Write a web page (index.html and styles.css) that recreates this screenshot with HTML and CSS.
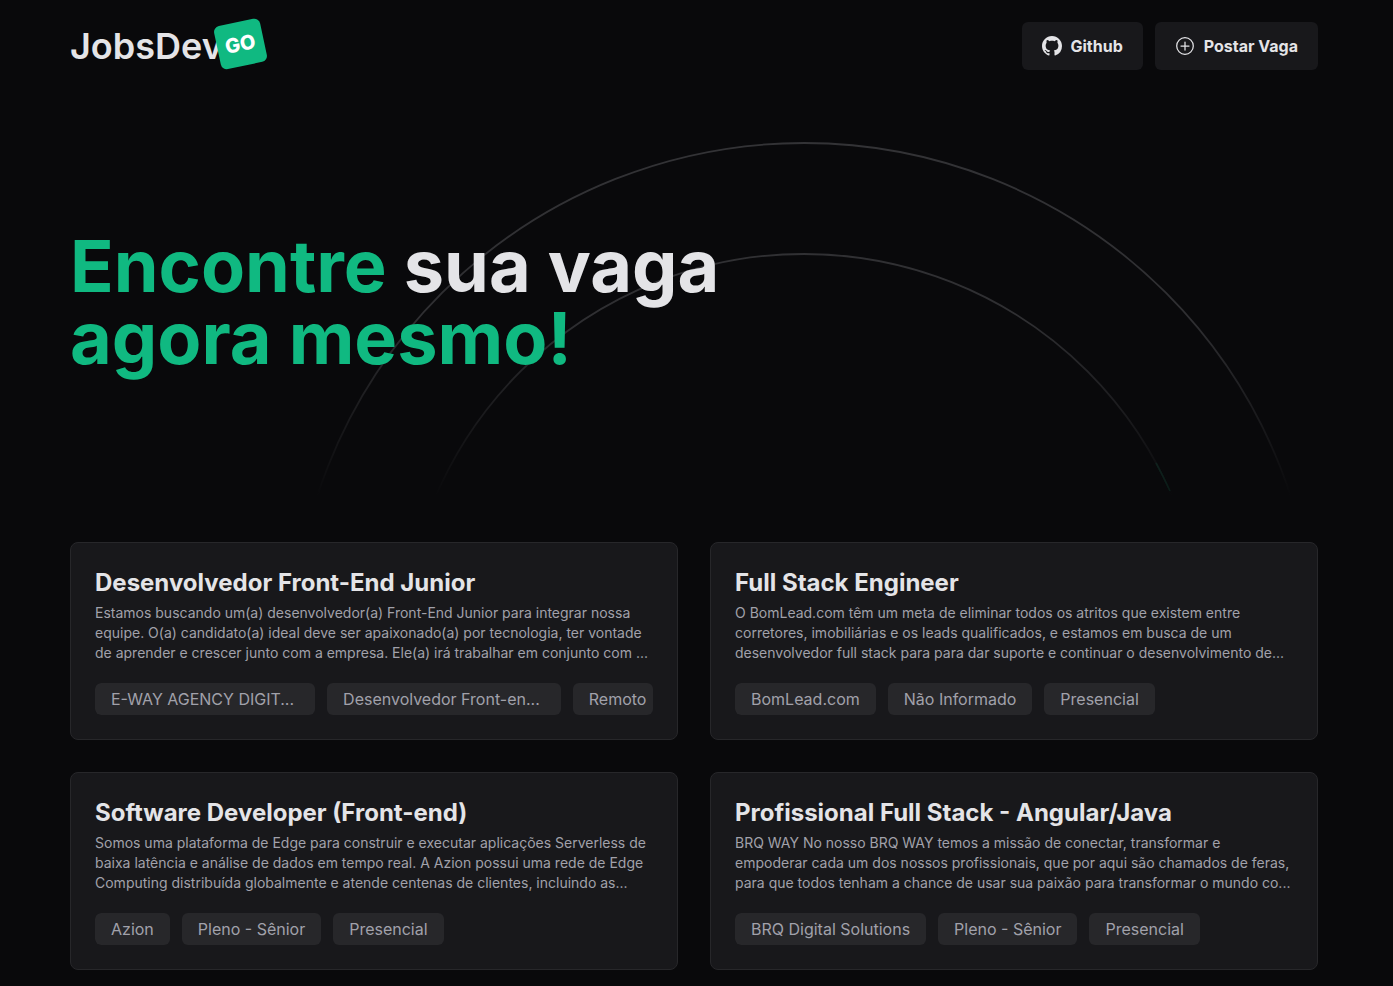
FILE: index.html
```html
<!DOCTYPE html>
<html lang="pt-BR">
<head>
<meta charset="utf-8">
<meta name="viewport" content="width=device-width, initial-scale=1">
<title>JobsDev</title>
<link rel="stylesheet" href="styles.css">
</head>
<body>
<div class="container">
  <header class="header">
    <a class="logo" href="#">JobsDev<span class="logo-badge">GO</span></a>
    <nav class="actions">
      <a class="action" href="#">
        <svg class="action-icon" viewBox="0 0 16 16" fill="currentColor" aria-hidden="true"><path d="M8 0C3.58 0 0 3.58 0 8c0 3.54 2.29 6.53 5.47 7.59.4.07.55-.17.55-.38 0-.19-.01-.82-.01-1.49-2.01.37-2.53-.49-2.69-.94-.09-.23-.48-.94-.82-1.13-.28-.15-.68-.52-.01-.53.63-.01 1.08.58 1.23.82.72 1.21 1.87.87 2.33.66.07-.52.28-.87.51-1.07-1.78-.2-3.64-.89-3.64-3.95 0-.87.31-1.59.82-2.15-.08-.2-.36-1.02.08-2.12 0 0 .67-.21 2.2.82.64-.18 1.32-.27 2-.27s1.36.09 2 .27c1.53-1.04 2.2-.82 2.2-.82.44 1.1.16 1.92.08 2.12.51.56.82 1.27.82 2.15 0 3.07-1.87 3.75-3.65 3.95.29.25.54.73.54 1.48 0 1.07-.01 1.93-.01 2.2 0 .21.15.46.55.38A8.01 8.01 0 0 0 16 8c0-4.42-3.58-8-8-8z"/></svg>
        Github
      </a>
      <a class="action" href="#">
        <svg class="action-icon" viewBox="0 0 20 20" fill="none" stroke="currentColor" stroke-width="1.25" stroke-linecap="round" aria-hidden="true"><circle cx="10" cy="10" r="8.3"/><path d="M10 6v8M6 10h8"/></svg>
        Postar Vaga
      </a>
    </nav>
  </header>

  <main>
    <section class="hero">
      <svg class="rings" viewBox="0 0 1026 360" fill="none" aria-hidden="true">
        <defs>
          <linearGradient id="ring-fade" gradientUnits="userSpaceOnUse" x1="0" y1="0" x2="0" y2="354">
            <stop offset="0" stop-color="#333336"/>
            <stop offset="0.5" stop-color="#2f2f32"/>
            <stop offset="1" stop-color="#2f2f32" stop-opacity="0"/>
          </linearGradient>
        </defs>
        <circle cx="513" cy="513" r="512" stroke="url(#ring-fade)" stroke-width="1.8"/>
        <circle cx="513" cy="513" r="401" stroke="url(#ring-fade)" stroke-width="1.8"/>
        <path d="M865 321A401 401 0 0 1 879 349" stroke="#10b981" stroke-opacity="0.1" stroke-width="1.8"/>
      </svg>
      <h1 class="title"><span class="accent">Encontre</span> sua vaga <span class="accent">agora mesmo!</span></h1>
    </section>

    <section class="jobs" aria-label="Vagas">
      <article class="card">
        <h2 class="card-title">Desenvolvedor Front-End Junior</h2>
        <p class="card-text">Estamos buscando um(a) desenvolvedor(a) Front-End Junior para integrar nossa equipe. O(a) candidato(a) ideal deve ser apaixonado(a) por tecnologia, ter vontade de aprender e crescer junto com a empresa. Ele(a) irá trabalhar em conjunto com ...</p>
        <ul class="tags"><li class="tag tag-shortened">E-WAY AGENCY DIGIT...</li><li class="tag tag-shortened">Desenvolvedor Front-en...</li><li class="tag">Remoto</li></ul>
      </article>
      <article class="card">
        <h2 class="card-title">Full Stack Engineer</h2>
        <p class="card-text">O BomLead.com têm um meta de eliminar todos os atritos que existem entre corretores, imobiliárias e os leads qualificados, e estamos em busca de um desenvolvedor full stack para para dar suporte e continuar o desenvolvimento de...</p>
        <ul class="tags"><li class="tag">BomLead.com</li><li class="tag">Não Informado</li><li class="tag">Presencial</li></ul>
      </article>
      <article class="card">
        <h2 class="card-title">Software Developer (Front-end)</h2>
        <p class="card-text">Somos uma plataforma de Edge para construir e executar aplicações Serverless de baixa latência e análise de dados em tempo real. A Azion possui uma rede de Edge Computing distribuída globalmente e atende centenas de clientes, incluindo as...</p>
        <ul class="tags"><li class="tag">Azion</li><li class="tag">Pleno - Sênior</li><li class="tag">Presencial</li></ul>
      </article>
      <article class="card">
        <h2 class="card-title">Profissional Full Stack - Angular/Java</h2>
        <p class="card-text">BRQ WAY No nosso BRQ WAY temos a missão de conectar, transformar e empoderar cada um dos nossos profissionais, que por aqui são chamados de feras, para que todos tenham a chance de usar sua paixão para transformar o mundo co...</p>
        <ul class="tags"><li class="tag">BRQ Digital Solutions</li><li class="tag">Pleno - Sênior</li><li class="tag">Presencial</li></ul>
      </article>
    </section>
  </main>
</div>
</body>
</html>
```
FILE: styles.css
```css
*, *::before, *::after { box-sizing: border-box; }

body {
  margin: 0;
  padding-right: 5px;
  background: #09090b;
  color: #e4e4e7;
  font-family: Inter, "Liberation Sans", sans-serif;
  font-size: 16px;
  line-height: 24px;
}

h1, h2, p, ul { margin: 0; padding: 0; }

a { color: inherit; text-decoration: none; }

.container {
  max-width: 1280px;
  margin: 0 auto;
  padding: 0 16px 16px;
}

.header {
  display: flex;
  align-items: center;
  justify-content: space-between;
  padding: 22px 0;
}

.logo {
  position: relative;
  font-size: 36px;
  line-height: 40px;
  font-weight: 600;
}

.logo-badge {
  position: absolute;
  top: -4px;
  right: -41px;
  padding: 11px 8px;
  border-radius: 6px;
  background: #10b981;
  color: #fff;
  font-size: 20px;
  line-height: 22px;
  font-weight: 800;
  transform: rotate(-12deg);
}

.actions { display: flex; gap: 12px; }

.action {
  display: flex;
  align-items: center;
  gap: 9px;
  padding: 12px 20px;
  border-radius: 6px;
  background: #18181b;
  font-weight: 700;
}

.action-icon { width: 20px; height: 20px; }

.hero {
  position: relative;
  display: flex;
  align-items: center;
  min-height: 420px;
  margin-bottom: 30px;
}

.rings {
  position: absolute;
  top: 50px;
  right: 1px;
  width: 1026px;
  height: 360px;
}

.title {
  position: relative;
  max-width: 672px;
  font-size: 72px;
  line-height: 72px;
  font-weight: 700;
}

.accent { color: #10b981; }

.jobs {
  display: grid;
  grid-template-columns: repeat(2, minmax(0, 1fr));
  gap: 32px;
}

.card {
  padding: 24px;
  border: 1px solid #27272a;
  border-radius: 8px;
  background: #18181b;
}

.card-title {
  font-size: 24px;
  line-height: 32px;
  font-weight: 700;
}

.card-text {
  margin: 4px 0 20px;
  color: #a1a1aa;
  font-size: 14px;
  line-height: 20px;
}

.tags {
  display: flex;
  gap: 12px;
  overflow: hidden;
  border-radius: 6px;
  list-style: none;
}

.tag {
  flex: none;
  padding: 4px 16px;
  border-radius: 6px;
  background: #27272a;
  color: #a1a1aa;
  white-space: nowrap;
}

.tag-shortened { padding-right: 21px; }
```
